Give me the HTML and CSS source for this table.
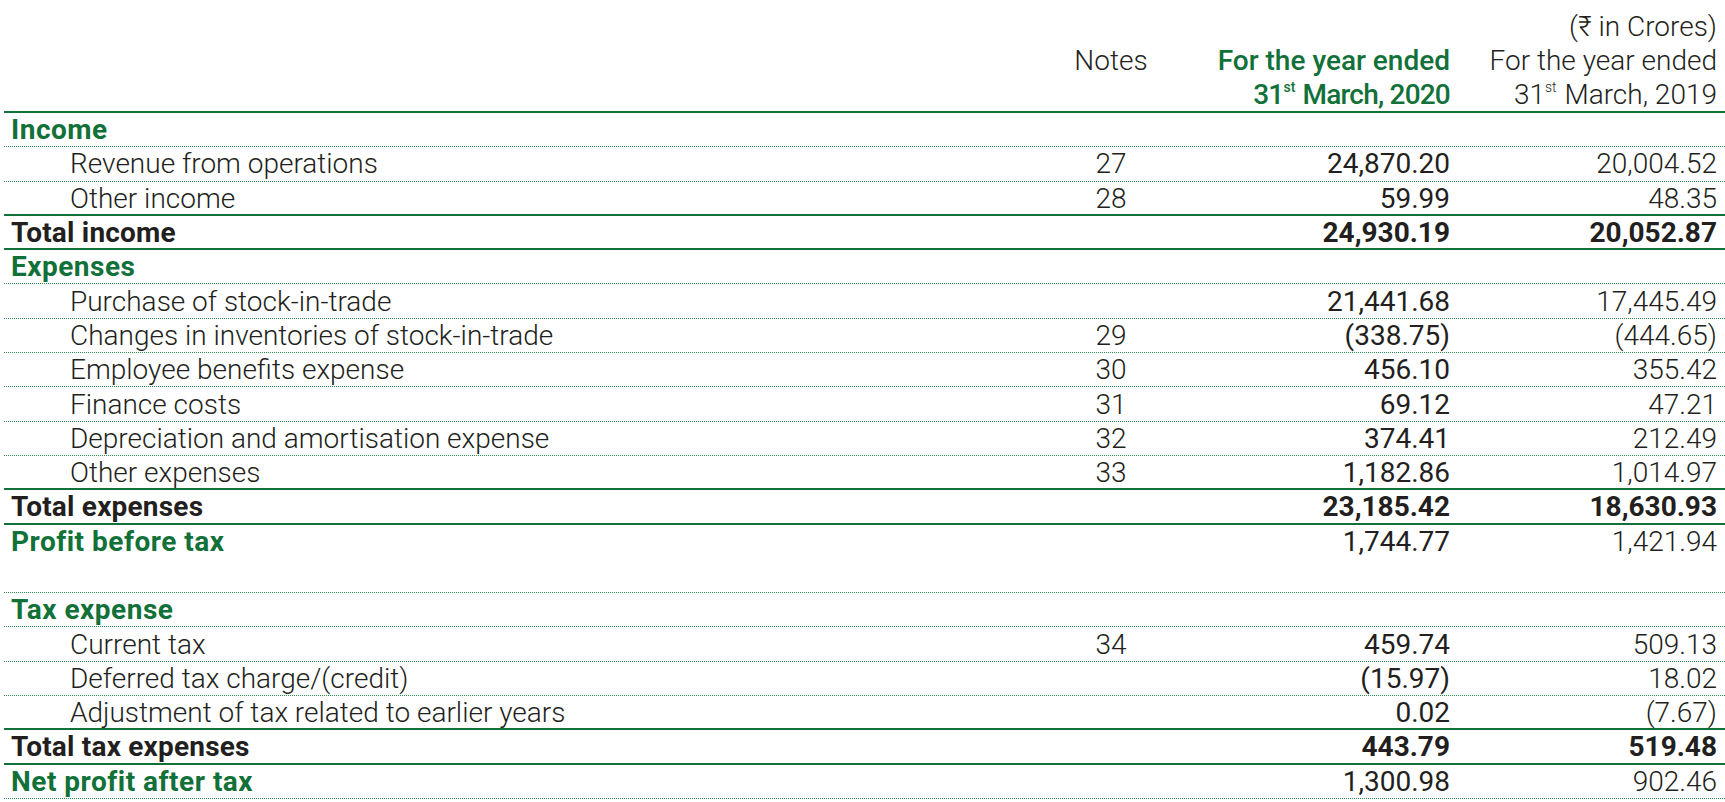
FILE: index.html
```html
<!DOCTYPE html>
<html lang="en">
<head>
<meta charset="utf-8">
<title>Statement of Profit and Loss</title>
<link rel="stylesheet" href="styles.css">
</head>
<body>
<div class="sheet">
  <div class="head">
    <div class="hrow">
      <div></div><div></div><div></div>
      <div class="num unit">(₹ in Crores)</div>
    </div>
    <div class="hrow">
      <div></div>
      <div class="note">Notes</div>
      <div class="num cur-h">For the year ended</div>
      <div class="num prev-h">For the year ended</div>
    </div>
    <div class="hrow">
      <div></div><div></div>
      <div class="num cur-h date">31<sup>st</sup> March, 2020</div>
      <div class="num prev-h">31<sup>st</sup> March, 2019</div>
    </div>
  </div>

  <div class="row dot"><div class="lbl sec">Income</div><div></div><div></div><div></div></div>
  <div class="row dot"><div class="lbl item">Revenue from operations</div><div class="note">27</div><div class="num cur">24,870.20</div><div class="num prev">20,004.52</div></div>
  <div class="row solid"><div class="lbl item">Other income</div><div class="note">28</div><div class="num cur">59.99</div><div class="num prev">48.35</div></div>
  <div class="row solid"><div class="lbl tot">Total income</div><div></div><div class="num tot">24,930.19</div><div class="num tot">20,052.87</div></div>

  <div class="row dot"><div class="lbl sec">Expenses</div><div></div><div></div><div></div></div>
  <div class="row dot"><div class="lbl item">Purchase of stock-in-trade</div><div class="note"></div><div class="num cur">21,441.68</div><div class="num prev">17,445.49</div></div>
  <div class="row dot"><div class="lbl item">Changes in inventories of stock-in-trade</div><div class="note">29</div><div class="num cur">(338.75)</div><div class="num prev">(444.65)</div></div>
  <div class="row dot"><div class="lbl item">Employee benefits expense</div><div class="note">30</div><div class="num cur">456.10</div><div class="num prev">355.42</div></div>
  <div class="row dot"><div class="lbl item">Finance costs</div><div class="note">31</div><div class="num cur">69.12</div><div class="num prev">47.21</div></div>
  <div class="row dot"><div class="lbl item">Depreciation and amortisation expense</div><div class="note">32</div><div class="num cur">374.41</div><div class="num prev">212.49</div></div>
  <div class="row solid"><div class="lbl item">Other expenses</div><div class="note">33</div><div class="num cur">1,182.86</div><div class="num prev">1,014.97</div></div>
  <div class="row solid"><div class="lbl tot">Total expenses</div><div></div><div class="num tot">23,185.42</div><div class="num tot">18,630.93</div></div>
  <div class="row"><div class="lbl sec">Profit before tax</div><div></div><div class="num cur">1,744.77</div><div class="num prev">1,421.94</div></div>
  <div class="row dot"><div></div><div></div><div></div><div></div></div>

  <div class="row dot"><div class="lbl sec">Tax expense</div><div></div><div></div><div></div></div>
  <div class="row dot"><div class="lbl item">Current tax</div><div class="note">34</div><div class="num cur">459.74</div><div class="num prev">509.13</div></div>
  <div class="row dot"><div class="lbl item">Deferred tax charge/(credit)</div><div class="note"></div><div class="num cur">(15.97)</div><div class="num prev">18.02</div></div>
  <div class="row solid"><div class="lbl item">Adjustment of tax related to earlier years</div><div class="note"></div><div class="num cur">0.02</div><div class="num prev">(7.67)</div></div>
  <div class="row solid"><div class="lbl tot">Total tax expenses</div><div></div><div class="num tot">443.79</div><div class="num tot">519.48</div></div>
  <div class="row dot"><div class="lbl sec">Net profit after tax</div><div></div><div class="num cur">1,300.98</div><div class="num prev">902.46</div></div>
</div>
</body>
</html>
```
FILE: styles.css
```css
html, body {
  margin: 0;
  padding: 0;
  background: #ffffff;
}

body {
  font-family: Roboto, "Liberation Sans", Arial, sans-serif;
  font-size: 28px;
  color: #231f20;
}

.sheet {
  margin-left: 4px;
  width: 1721px;
}

.head {
  padding-top: 9px;
  border-bottom: 2px solid #127139;
}

.hrow,
.row {
  display: grid;
  grid-template-columns: 1042px 130px 282px 267px;
  align-items: center;
}

.hrow {
  height: 34px;
  font-weight: 300;
}

.row {
  box-sizing: border-box;
  height: 34.3px;
}

.dot {
  border-bottom: 1px dotted #2f8a52;
}

.solid {
  border-bottom: 2px solid #127139;
}

.lbl {
  white-space: nowrap;
  padding-left: 7px;
}

.lbl.item {
  padding-left: 66px;
  font-weight: 300;
}

.lbl.sec {
  color: #127139;
  font-weight: 700;
  letter-spacing: 0.5px;
}

.lbl.tot {
  font-weight: 700;
  letter-spacing: 0.2px;
}

.note {
  text-align: center;
  font-weight: 300;
}

.num {
  text-align: right;
  padding-right: 8px;
  white-space: nowrap;
}

.num.cur {
  font-weight: 400;
}

.num.prev {
  font-weight: 300;
}

.num.tot {
  font-weight: 700;
}

.unit {
  font-weight: 300;
}

.cur-h {
  color: #127139;
  font-weight: 500;
}

.cur-h.date {
  letter-spacing: -0.8px;
}

.prev-h {
  font-weight: 300;
}

sup {
  font-size: 0.5em;
  vertical-align: 0;
  position: relative;
  top: -0.8em;
  margin-left: 0;
  margin-right: 1px;
  letter-spacing: 0;
}
```
